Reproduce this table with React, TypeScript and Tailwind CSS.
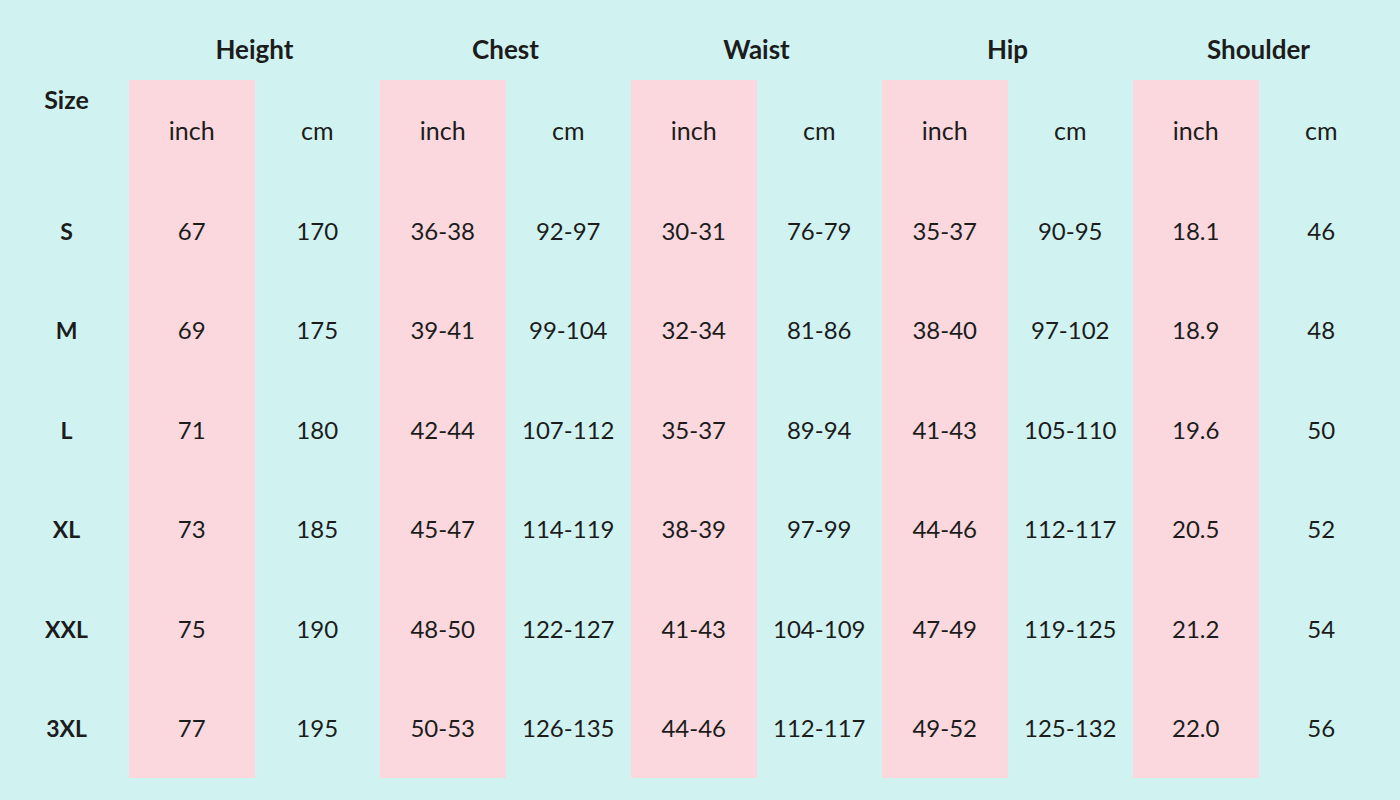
const groups = ['Height', 'Chest', 'Waist', 'Hip', 'Shoulder'];

const sizes = ['S', 'M', 'L', 'XL', 'XXL', '3XL'];

// each row: [inch, cm] pairs per group
const rows: string[][] = [
  ['67', '170', '36-38', '92-97', '30-31', '76-79', '35-37', '90-95', '18.1', '46'],
  ['69', '175', '39-41', '99-104', '32-34', '81-86', '38-40', '97-102', '18.9', '48'],
  ['71', '180', '42-44', '107-112', '35-37', '89-94', '41-43', '105-110', '19.6', '50'],
  ['73', '185', '45-47', '114-119', '38-39', '97-99', '44-46', '112-117', '20.5', '52'],
  ['75', '190', '48-50', '122-127', '41-43', '104-109', '47-49', '119-125', '21.2', '54'],
  ['77', '195', '50-53', '126-135', '44-46', '112-117', '49-52', '125-132', '22.0', '56'],
];

function DataColumn({ index }: { index: number }) {
  const isInch = index % 2 === 0;
  return (
    <div className={`flex w-[125.5px] flex-col ${isInch ? 'bg-[#fbd8dd]' : ''}`}>
      <div className="flex h-[101px] items-center justify-center text-[25px]">
        {isInch ? 'inch' : 'cm'}
      </div>
      {rows.map((r, i) => (
        <div key={i} className="flex h-[99.5px] items-center justify-center text-[24px]">
          {r[index]}
        </div>
      ))}
    </div>
  );
}

export default function App() {
  return (
    <div
      className="h-[800px] w-[1400px] bg-[#d0f3f1] text-[#1c1c1c]"
      style={{ fontFamily: 'Lato, "Open Sans", sans-serif' }}
    >
      <div className="flex h-[80px]">
        <div className="w-[129px]" />
        {groups.map((g) => (
          <div key={g} className="flex w-[251px] justify-center pt-[34px] text-[26px] font-bold leading-[30px]">
            {g}
          </div>
        ))}
      </div>
      <div className="flex h-[698px]">
        <div className="flex w-[129px] flex-col pl-[4px]">
          <div className="h-[101px] pt-[4px] text-center text-[25px] font-bold leading-[30px]">Size</div>
          {sizes.map((s) => (
            <div key={s} className="flex h-[99.5px] items-center justify-center text-[23px] font-bold">
              {s}
            </div>
          ))}
        </div>
        {Array.from({ length: 10 }, (_, i) => (
          <DataColumn key={i} index={i} />
        ))}
      </div>
    </div>
  );
}
